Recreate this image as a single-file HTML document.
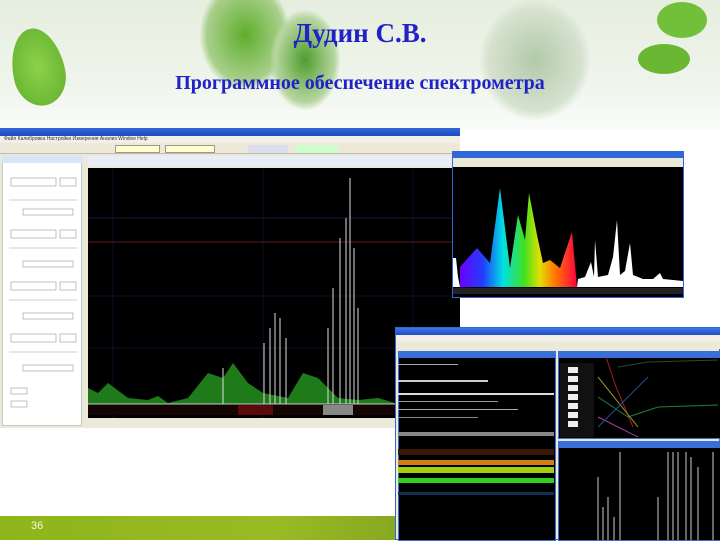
<!DOCTYPE html>
<html><head><meta charset="utf-8"><style>
*{margin:0;padding:0;box-sizing:border-box}
body{width:720px;height:540px;overflow:hidden;position:relative;background:#fff;font-family:"Liberation Serif",serif}
.a{position:absolute}
</style></head><body>
<div class="a" style="left:0;top:0;width:720px;height:130px;background:linear-gradient(180deg,#e6eedf 0%,#eef4ea 60%,#fafcf9 100%)"></div>
<div class="a" style="left:200px;top:-20px;width:90px;height:110px;border-radius:50%;background:radial-gradient(#5fae2c,#a9cf8c 60%,transparent 72%)"></div>
<div class="a" style="left:270px;top:10px;width:70px;height:100px;border-radius:50%;background:radial-gradient(#4f9d2e,#b6d69f 60%,transparent 72%)"></div>
<div class="a" style="left:480px;top:0px;width:110px;height:120px;border-radius:50%;background:radial-gradient(#b3c9a9,#d6e2d0 60%,transparent 72%)"></div>
<div class="a" style="left:12px;top:28px;width:52px;height:78px;border-radius:50% 50% 50% 50%/60% 60% 40% 40%;background:radial-gradient(#8ed24a,#5fae2c);transform:rotate(-12deg)"></div>
<div class="a" style="left:657px;top:2px;width:50px;height:36px;border-radius:50%;background:#72c03a"></div>
<div class="a" style="left:638px;top:44px;width:52px;height:30px;border-radius:50%;background:#6ab734"></div>
<div class="a" style="left:0;top:18px;width:720px;text-align:center;font-weight:bold;font-size:27px;color:#2121c8">Дудин С.В.</div>
<div class="a" style="left:0;top:72px;width:720px;text-align:center;font-weight:bold;font-size:20px;color:#2121c8">Программное обеспечение спектрометра</div>

<!-- main window -->
<div class="a" style="left:0;top:128px;width:460px;height:300px;background:#ece9d8;border-right:1px solid #3a6fd8">
 <div class="a" style="left:0;top:0;width:460px;height:8px;background:linear-gradient(#2f66d8,#1d4bc0)"></div>
 <div class="a" style="left:0;top:8px;width:460px;height:7px;background:#f1efe6;font:5px 'Liberation Sans',sans-serif;color:#333;padding-left:4px">Файл Калибровка Настройки Измерения Анализ Window Help</div>
 <div class="a" style="left:0;top:15px;width:460px;height:11px;background:#ece9d8;border-bottom:1px solid #bbb"></div>
 <div class="a" style="left:115px;top:17px;width:45px;height:8px;background:#ffc;border:1px solid #999"></div>
 <div class="a" style="left:165px;top:17px;width:50px;height:8px;background:#ffc;border:1px solid #999"></div>
 <div class="a" style="left:248px;top:17px;width:40px;height:8px;background:#dde"></div>
 <div class="a" style="left:296px;top:17px;width:42px;height:8px;background:#cfc"></div>
 <div class="a" style="left:2px;top:28px;width:80px;height:270px;background:#fff;border:1px solid #bcc"></div>
 <div class="a" style="left:2px;top:28px;width:80px;height:7px;background:#d8e4f8"></div>
 <div class="a" style="left:88px;top:28px;width:372px;height:10px;background:#e8eef8"></div>
 <div class="a" style="left:88px;top:40px;width:372px;height:250px;background:#000"></div>
</div>
<svg class="a" style="left:3px;top:160px" width="78" height="260">
 <g stroke="#999" stroke-width=".6" fill="none">
  <rect x="8" y="18" width="45" height="8"/><rect x="57" y="18" width="16" height="8"/><line x1="6" y1="40" x2="74" y2="40"/><rect x="20" y="49" width="50" height="6"/>
  <rect x="8" y="70" width="45" height="8"/><rect x="57" y="70" width="16" height="8"/><line x1="6" y1="88" x2="74" y2="88"/><rect x="20" y="101" width="50" height="6"/>
  <rect x="8" y="122" width="45" height="8"/><rect x="57" y="122" width="16" height="8"/><line x1="6" y1="140" x2="74" y2="140"/><rect x="20" y="153" width="50" height="6"/>
  <rect x="8" y="174" width="45" height="8"/><rect x="57" y="174" width="16" height="8"/><line x1="6" y1="192" x2="74" y2="192"/><rect x="20" y="205" width="50" height="6"/>
  <rect x="8" y="228" width="16" height="6"/><rect x="8" y="241" width="16" height="6"/>
 </g>
</svg>
<svg class="a" style="left:88px;top:168px" width="372" height="250">
 <line x1="0" y1="50" x2="372" y2="50" stroke="#2a2a80" stroke-width=".6"/>
 <line x1="0" y1="74" x2="372" y2="74" stroke="#802020" stroke-width=".8"/>
 <line x1="0" y1="128" x2="372" y2="128" stroke="#1a1a55" stroke-width=".6"/>
 <line x1="0" y1="180" x2="372" y2="180" stroke="#1a1a55" stroke-width=".6"/>
 <line x1="25" y1="0" x2="25" y2="250" stroke="#1a1a55" stroke-width=".5"/>
 <line x1="175" y1="0" x2="175" y2="250" stroke="#1a1a55" stroke-width=".5"/>
 <line x1="325" y1="0" x2="325" y2="250" stroke="#1a1a55" stroke-width=".5"/>
 <path d="M0 236 L0 220 L10 225 L20 215 L40 230 L60 232 L70 228 L80 235 L100 230 L120 205 L135 210 L145 195 L160 215 L175 225 L200 230 L215 205 L230 210 L250 230 L270 232 L290 230 L307 235 L307 236Z" fill="#1f7a1a"/>
 <g stroke="#ddd" stroke-width="1">
  <line x1="262" y1="236" x2="262" y2="10"/><line x1="258" y1="236" x2="258" y2="50"/><line x1="252" y1="236" x2="252" y2="70"/><line x1="266" y1="236" x2="266" y2="80"/><line x1="245" y1="236" x2="245" y2="120"/><line x1="270" y1="236" x2="270" y2="140"/><line x1="240" y1="236" x2="240" y2="160"/>
  <line x1="187" y1="236" x2="187" y2="145"/><line x1="182" y1="236" x2="182" y2="160"/><line x1="192" y1="236" x2="192" y2="150"/><line x1="176" y1="236" x2="176" y2="175"/><line x1="198" y1="236" x2="198" y2="170"/>
  <line x1="135" y1="236" x2="135" y2="200"/>
 </g>
 <line x1="0" y1="236" x2="372" y2="236" stroke="#ccc" stroke-width="1"/>
 <rect x="0" y="237" width="372" height="10" fill="#140404"/>
 <rect x="150" y="237" width="35" height="10" fill="#5a0a0a"/>
 <rect x="235" y="237" width="30" height="10" fill="#888"/>
</svg>

<!-- spectrum window -->
<div class="a" style="left:452px;top:151px;width:232px;height:147px;background:#ece9d8;border:1px solid #2f66d8">
 <div class="a" style="left:0;top:0;width:230px;height:6px;background:#2f66d8"></div>
 <div class="a" style="left:0;top:15px;width:230px;height:130px;background:#000"></div>
</div>
<svg class="a" style="left:453px;top:167px" width="230" height="130">
 <defs><linearGradient id="sp" x1="0" x2="1"><stop offset="0" stop-color="#6a00ff"/><stop offset=".2" stop-color="#2040ff"/><stop offset=".37" stop-color="#00e0e0"/><stop offset=".55" stop-color="#40e020"/><stop offset=".68" stop-color="#e0e000"/><stop offset=".8" stop-color="#ff8000"/><stop offset="1" stop-color="#ff0040"/></linearGradient></defs>
 <path d="M7 120 L7 100 L24 81 L37 96 L47 21 L57 101 L65 48 L72 73 L76 26 L84 68 L90 96 L97 93 L107 101 L119 65 L124 120Z" fill="url(#sp)"/>
 <path d="M0 120 L0 91 L3 91 L5 110 L7 120Z M124 120 L125 112 L132 110 L138 95 L141 110 L142 73 L145 110 L155 108 L160 90 L164 53 L167 108 L172 104 L177 76 L180 108 L190 112 L200 112 L207 106 L210 112 L230 114 L230 120Z" fill="#fff"/>
 <rect x="0" y="121" width="230" height="6" fill="#222"/>
</svg>

<!-- third window -->
<div class="a" style="left:395px;top:327px;width:325px;height:213px;background:#ece9d8;border:1px solid #2f66d8">
 <div class="a" style="left:0;top:0;width:325px;height:7px;background:linear-gradient(#3a78e8,#1d4bc0)"></div>
 <div class="a" style="left:0;top:7px;width:325px;height:6px;background:#f1efe6"></div>
 <div class="a" style="left:0;top:13px;width:325px;height:8px;background:#ece9d8"></div>
 <div class="a" style="left:2px;top:23px;width:158px;height:190px;border:1px solid #3a6fd8;background:#000"></div>
 <div class="a" style="left:2px;top:23px;width:158px;height:7px;background:#3a6fd8"></div>
 <div class="a" style="left:162px;top:23px;width:163px;height:88px;border:1px solid #3a6fd8;background:#000"></div>
 <div class="a" style="left:162px;top:23px;width:163px;height:7px;background:#3a6fd8"></div>
 <div class="a" style="left:162px;top:113px;width:163px;height:100px;border:1px solid #3a6fd8;background:#000"></div>
 <div class="a" style="left:162px;top:113px;width:163px;height:7px;background:#3a6fd8"></div>
</div>
<svg class="a" style="left:398px;top:357px" width="156" height="183">
 <rect x="0" y="7" width="60" height="1" fill="#aaa"/>
 <rect x="0" y="23" width="90" height="2" fill="#ccc"/>
 <rect x="0" y="36" width="156" height="2" fill="#ddd"/>
 <rect x="0" y="44" width="100" height="1" fill="#999"/>
 <rect x="0" y="52" width="120" height="1" fill="#aaa"/>
 <rect x="0" y="60" width="80" height="1" fill="#888"/>
 <rect x="0" y="75" width="156" height="4" fill="#888"/>
 <rect x="0" y="92" width="156" height="6" fill="#3a1808"/>
 <rect x="0" y="103" width="156" height="5" fill="#d08010"/>
 <rect x="0" y="110" width="156" height="6" fill="#a0d010"/>
 <rect x="0" y="121" width="156" height="5" fill="#30d020"/>
 <rect x="0" y="135" width="156" height="3" fill="#103050"/>
</svg>
<svg class="a" style="left:558px;top:357px" width="160" height="80">
 <rect x="2" y="6" width="34" height="74" fill="#111"/>
 <g fill="#eee"><rect x="10" y="10" width="10" height="6"/><rect x="10" y="19" width="10" height="6"/><rect x="10" y="28" width="10" height="6"/><rect x="10" y="37" width="10" height="6"/><rect x="10" y="46" width="10" height="6"/><rect x="10" y="55" width="10" height="6"/><rect x="10" y="64" width="10" height="6"/></g>
 <path d="M40 60 L60 70 L80 80" stroke="#a040a0" fill="none"/>
 <path d="M48 0 L58 30 L75 70" stroke="#a02020" fill="none"/>
 <path d="M60 10 L90 5 L160 3" stroke="#205020" fill="none"/>
 <path d="M40 40 L70 60 L100 50 L160 48" stroke="#208040" fill="none"/>
 <path d="M40 20 L60 45 L80 70" stroke="#a0a020" fill="none"/>
 <path d="M40 70 L70 40 L90 20" stroke="#205090" fill="none"/>
</svg>
<svg class="a" style="left:558px;top:447px" width="160" height="93">
 <g stroke="#ccc" stroke-width="1">
  <line x1="40" y1="93" x2="40" y2="30"/><line x1="45" y1="93" x2="45" y2="60"/><line x1="50" y1="93" x2="50" y2="50"/><line x1="56" y1="93" x2="56" y2="70"/><line x1="62" y1="93" x2="62" y2="5"/>
  <line x1="100" y1="93" x2="100" y2="50"/><line x1="110" y1="93" x2="110" y2="5"/><line x1="115" y1="93" x2="115" y2="5"/><line x1="120" y1="93" x2="120" y2="5"/><line x1="128" y1="93" x2="128" y2="5"/><line x1="133" y1="93" x2="133" y2="10"/><line x1="140" y1="93" x2="140" y2="20"/><line x1="155" y1="93" x2="155" y2="5"/>
 </g>
</svg>

<div class="a" style="left:0;top:516px;width:395px;height:24px;background:linear-gradient(90deg,#8eb51a,#9aba24 70%,#88a820)"></div>
<div class="a" style="left:31px;top:520px;font:11px 'Liberation Sans',sans-serif;color:#f4f8e0">36</div>
</body></html>
